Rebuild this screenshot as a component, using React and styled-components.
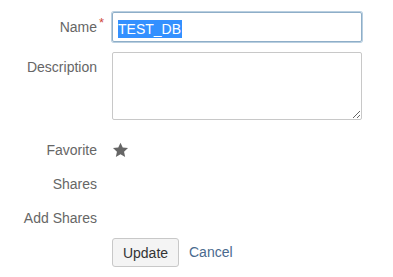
import React from 'react';
import styled, { createGlobalStyle } from 'styled-components';

const GlobalStyle = createGlobalStyle`
body{
  margin:0;
  background:#fff;
  font-family:"Liberation Sans", Arial, sans-serif;
  font-size:14px;
  line-height:20px;
}
`

const Form = styled.div`
padding-top:12px;
display:flex;
flex-direction:column;
`
const Row = styled.div`
display:flex;
gap:15px;
height:${p => p.$h}px;
margin-bottom:${p => p.$mb || 0}px;
`
const Label = styled.div`
width:97px;
flex:none;
text-align:right;
color:#666;
padding-top:${p => p.$pt}px;
line-height:20px;
`
const LabelText = styled.span`
position:relative;
`
const Required = styled.span`
position:absolute;
right:-7px;
top:-6px;
color:#d04a3c;
font-size:13px;
`
const InputBox = styled.div`
box-sizing:border-box;
width:250px;
height:30px;
border:1px solid #8eaec8;
box-shadow:0 0 0 1px #b9cfe0;
border-radius:2px;
padding:6px 0 0 5px;
color:#333;
font-size:14px;
`
const Selected = styled.span`
display:inline-block;
background:#3390ff;
color:#fff;
line-height:18px;
padding-right:1px;
`
const TextArea = styled.textarea`
box-sizing:border-box;
width:250px;
height:68px;
border:1px solid #c8c8c8;
border-radius:2px;
resize:vertical;
margin:0;
font-family:inherit;
`
const Control = styled.div`
padding-top:${p => p.$pt}px;
display:flex;
align-items:flex-start;
`
const Button = styled.button`
box-sizing:border-box;
width:67px;
height:29px;
background:#f4f4f4;
border:1px solid #c8c8c8;
border-radius:3px;
font-family:inherit;
font-size:14px;
color:#333;
padding:0;
`
const CancelLink = styled.a`
color:#4a6a8e;
margin-left:10px;
line-height:29px;
text-decoration:none;
`

function Star(){
  return(
    <svg width="17" height="16" viewBox="0 0 24 23">
      <path d="M12 1l3.2 7 7.6.8-5.7 5.1 1.6 7.5L12 17.6 5.3 21.4l1.6-7.5L1.2 8.8 8.8 8z" fill="#666"/>
    </svg>
  )
}

export default function App(){
  return(
    <React.Fragment>
      <GlobalStyle/>
      <Form>
        <Row $h={30} $mb={10}>
          <Label $pt={5}><LabelText>Name<Required>*</Required></LabelText></Label>
          <InputBox><Selected>TEST_DB</Selected></InputBox>
        </Row>
        <Row $h={68} $mb={10}>
          <Label $pt={5}>Description</Label>
          <TextArea/>
        </Row>
        <Row $h={34}>
          <Label $pt={10}>Favorite</Label>
          <Control $pt={12}><Star/></Control>
        </Row>
        <Row $h={34}>
          <Label $pt={10}>Shares</Label>
        </Row>
        <Row $h={34} $mb={6}>
          <Label $pt={10}>Add Shares</Label>
        </Row>
        <Row $h={29}>
          <Label/>
          <Control $pt={0}>
            <Button>Update</Button>
            <CancelLink href="#">Cancel</CancelLink>
          </Control>
        </Row>
      </Form>
    </React.Fragment>
  )
}
